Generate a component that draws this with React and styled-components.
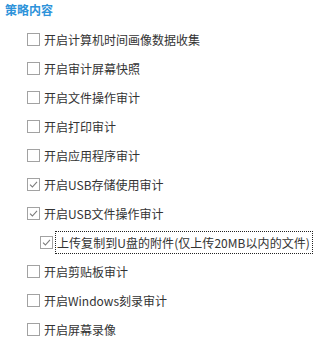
import React from "react";
import styled, { createGlobalStyle } from "styled-components";

const Global = createGlobalStyle`
  html, body { margin: 0; padding: 0; background: #fff; }
  body { font-family: "Noto Sans CJK SC", "Noto Sans", sans-serif; }
`;

const Panel = styled.div`
  width: 318px;
  height: 345px;
  background: #fff;
  overflow: hidden;
`;

const Title = styled.div`
  height: 25px;
  padding: 1px 0 0 5px;
  box-sizing: border-box;
  font-size: 12px;
  line-height: 18px;
  font-weight: 700;
  color: #2e93da;
`;

const List = styled.div`
  display: flex;
  flex-direction: column;
`;

const Row = styled.label`
  height: 29px;
  display: flex;
  align-items: center;
  padding-left: ${(p) => (p.$nested ? 40 : 27)}px;
  font-size: 12px;
  color: #333;
`;

const Box = styled.span`
  width: 13px;
  height: 13px;
  box-sizing: border-box;
  border: 1px solid #a2a2a2;
  background: #fff;
  display: flex;
  align-items: center;
  justify-content: center;
  flex: none;
`;

const Text = styled.span`
  margin-left: ${(p) => (p.$focus ? 2 : 4)}px;
  padding: ${(p) => (p.$focus ? "2px 2px 2px 1px" : "0")};
  border: ${(p) => (p.$focus ? "1px dotted #222" : "none")};
  line-height: 17px;
  white-space: nowrap;
  letter-spacing: ${(p) => (p.$focus ? "0.05px" : "0")};
`;

const Check = () => (
  <svg width="9" height="9" viewBox="0 0 9 9">
    <path d="M1 4.6 L3.4 7 L8 1.8" fill="none" stroke="#7a7a7a" strokeWidth="1.1" />
  </svg>
);

const items = [
  { t: "开启计算机时间画像数据收集" },
  { t: "开启审计屏幕快照" },
  { t: "开启文件操作审计" },
  { t: "开启打印审计" },
  { t: "开启应用程序审计" },
  { t: "开启USB存储使用审计", c: true },
  { t: "开启USB文件操作审计", c: true },
  { t: "上传复制到U盘的附件(仅上传20MB以内的文件)", c: true, nested: true, focus: true },
  { t: "开启剪贴板审计" },
  { t: "开启Windows刻录审计" },
  { t: "开启屏幕录像" },
];

export default function App() {
  return (
    <Panel>
      <Global />
      <Title>策略内容</Title>
      <List>
        {items.map((it, i) => (
          <Row key={i} $nested={it.nested}>
            <Box>{it.c && <Check />}</Box>
            <Text $focus={it.focus}>{it.t}</Text>
          </Row>
        ))}
      </List>
    </Panel>
  );
}
